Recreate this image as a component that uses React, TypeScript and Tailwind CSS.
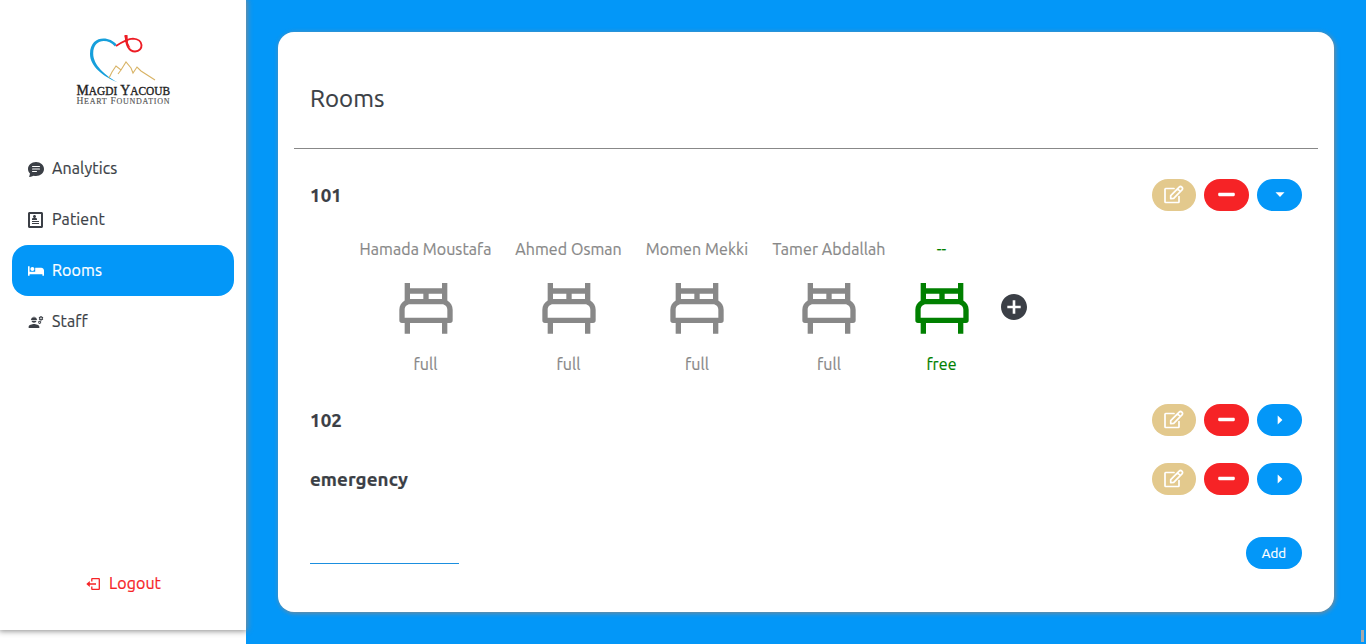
import { BsChatTextFill } from "react-icons/bs";
import { ImProfile } from "react-icons/im";
import { FaBed, FaMinus } from "react-icons/fa";
import { MdEngineering } from "react-icons/md";
import { BiBed } from "react-icons/bi";
import { IoMdAddCircle } from "react-icons/io";
import type { ReactNode } from "react";

function Logo() {
  return (
    <svg width="96" height="72" viewBox="0 0 96 72" className="block">
      <path d="M41.500 10.500C34 1.500 15 1.500 15 20C15 32 27 42 43 48.500C30 41.500 18.200 31 18.200 19.500C18.200 5.500 32 3.500 40 12.500Z" fill="#169fdb" />
      <path d="M41 12C47 8 52 4.800 58 4.600C69 5 69 17 60 17.500C54 17.500 50.500 11 50.800 1" fill="none" stroke="#ed1c24" strokeWidth="1.900" />
      <path d="M49.200 1.500L52.500 1L53 9L55.500 14L52 11Z" fill="#ed1c24" />
      <path d="M34 44L37 38L41 32L46 36L51 28L56 34L58 39L62 33L66 37L80 46M46 36L43 40" fill="none" stroke="#d8b365" strokeWidth="1.100" />
      <text x="1.500" y="61" textLength="93.500" lengthAdjust="spacingAndGlyphs" fill="#222" stroke="#222" strokeWidth=".35" fontFamily="Liberation Serif, serif" fontSize="14">M<tspan fontSize="11.500">AGDI</tspan> Y<tspan fontSize="11.500">ACOUB</tspan></text>
      <text x="1.500" y="70" textLength="93" lengthAdjust="spacing" fill="#555" stroke="#555" strokeWidth=".15" fontFamily="Liberation Serif, serif" fontSize="9.500">H<tspan fontSize="8">EART</tspan> F<tspan fontSize="8">OUNDATION</tspan></text>
    </svg>
  );
}

function EditIcon() {
  return (
    <svg width="20" height="20" viewBox="0 0 20 20" fill="none" stroke="currentColor" strokeWidth="1.700" strokeLinejoin="round" strokeLinecap="round">
      <path d="M10 3.500H1.700Q1 3.500 1 4.200V16.800Q1 17.500 1.700 17.500H14.300Q15 17.500 15 16.800V11.500" />
      <path d="M6.700 13.700V10.700L15.200 2.100Q16.500 .9 17.900 2.100Q19.200 3.500 18 4.900L9.700 13.300L6.700 13.700ZM13.600 3.900L16.300 6.500" />
    </svg>
  );
}

function LogoutIcon() {
  return (
    <svg width="16" height="16" viewBox="0 0 16 16" fill="none" stroke="currentColor" strokeWidth="1.300">
      <path d="M6.800 5.500V3Q6.800 2.600 7.200 2.600H13.900Q14.300 2.600 14.300 3V13Q14.300 13.400 13.900 13.400H7.200Q6.800 13.400 6.800 13V10.500M4 8H11" />
      <path d="M1.300 8L4.800 5V11Z" fill="currentColor" stroke="none" />
    </svg>
  );
}

function Caret({ open }: { open: boolean }) {
  return (
    <svg width="10" height="10" viewBox="0 0 10 10" fill="currentColor">
      <path d={open ? "M.5 2.300H9.500L5 7Z" : "M2.700 .5V9.500L7.400 5Z"} />
    </svg>
  );
}

function NavItem({ icon, label, active = false }: { icon: ReactNode; label: string; active?: boolean }) {
  return (
    <a className={`flex h-[51px] items-center gap-2 rounded-2xl px-4 pb-0.5 ${active ? "bg-[#0397f8] text-white" : ""}`}>
      <span className="pt-0.5">{icon}</span>
      <span className="tracking-[0.12px]">{label}</span>
    </a>
  );
}

function RoomRow({ name, open = false }: { name: string; open?: boolean }) {
  return (
    <div className="flex h-8 items-center justify-between">
      <h2 className="pt-0.5 text-[18.72px] leading-7 font-bold tracking-[0.1px]">{name}</h2>
      <div className="flex gap-2 text-white">
        <button aria-label="Edit" className="flex h-8 w-11 items-center justify-center rounded-2xl bg-[#e3c98d]"><EditIcon /></button>
        <button aria-label="Remove" className="flex h-8 w-[45px] items-center justify-center rounded-2xl bg-[#f62326] pr-px pb-px"><FaMinus size={19} /></button>
        <button aria-label="Toggle" className="flex h-8 w-[45px] items-center justify-center rounded-2xl bg-[#0397f8]"><Caret open={open} /></button>
      </div>
    </div>
  );
}

const beds = [
  { name: "Hamada Moustafa", width: "w-[132px]", free: false },
  { name: "Ahmed Osman", width: "w-[106px]", free: false },
  { name: "Momen Mekki", width: "w-[103px]", free: false },
  { name: "Tamer Abdallah", width: "w-[113px]", free: false },
  { name: "--", width: "w-[64px]", free: true },
];

export default function App() {
  return (
    <div className="flex h-[644px] w-[1366px] overflow-hidden bg-white font-['Ubuntu','Noto_Sans',sans-serif] text-base tracking-[0.08px] text-[#3b3f46] [-webkit-text-stroke:0.2px]">
      <aside className="z-10 flex h-[630px] w-[246px] shrink-0 flex-col bg-white px-3 shadow-[0_0_6px_1px_#888]">
        <div className="flex h-[143px] justify-center pt-[34px] tracking-normal"><Logo /></div>
        <nav className="w-[222px]">
          <NavItem icon={<BsChatTextFill size={16} />} label="Analytics" />
          <NavItem icon={<ImProfile size={16} />} label="Patient" />
          <NavItem icon={<FaBed size={16} />} label="Rooms" active />
          <NavItem icon={<MdEngineering size={16} />} label="Staff" />
        </nav>
        <a className="mt-auto mb-[35px] flex items-center justify-center gap-2 text-[#f62326]">
          <span className="pt-0.5"><LogoutIcon /></span>
          <span>Logout</span>
        </a>
      </aside>
      <main className="relative flex-1 bg-[#0397f8] p-8">
        <section className="h-[580px] rounded-2xl bg-white px-4 shadow-[1px_1px_5px_0_#888]">
          <header className="flex h-[117px] items-center border-b border-[#888] px-4 pt-[18px]">
            <h1 className="text-2xl">Rooms</h1>
          </header>
          <div className="px-4 pt-[30px]">
            <RoomRow name="101" open />
            <div className="flex h-[193px] items-start gap-6 pt-[26px] pl-[49.5px]">
              {beds.map((b) => (
                <div key={b.name} className={`flex flex-col items-center whitespace-nowrap ${b.width} ${b.free ? "text-[#008000]" : "text-[#888]"}`}>
                  <span>{b.name}</span>
                  <BiBed size={64} className="mt-[14px]" />
                  <span className="mt-[13px]">{b.free ? "free" : "full"}</span>
                </div>
              ))}
              <IoMdAddCircle size={32} className="mt-[54px]" />
            </div>
            <RoomRow name="102" />
            <div className="h-[27px]" />
            <RoomRow name="emergency" />
            <div className="mt-[42px] flex h-8 items-start justify-between">
              <input aria-label="Room name" className="h-[27px] w-[149px] border-b border-[#1b8fdf] outline-none" />
              <button className="h-8 w-14 rounded-2xl bg-[#0397f8] pt-px text-[13.333px] text-white">Add</button>
            </div>
          </div>
        </section>
        <div className="absolute right-[2px] bottom-[2px] h-3 w-[3px] bg-[#aaa]" />
      </main>
    </div>
  );
}
